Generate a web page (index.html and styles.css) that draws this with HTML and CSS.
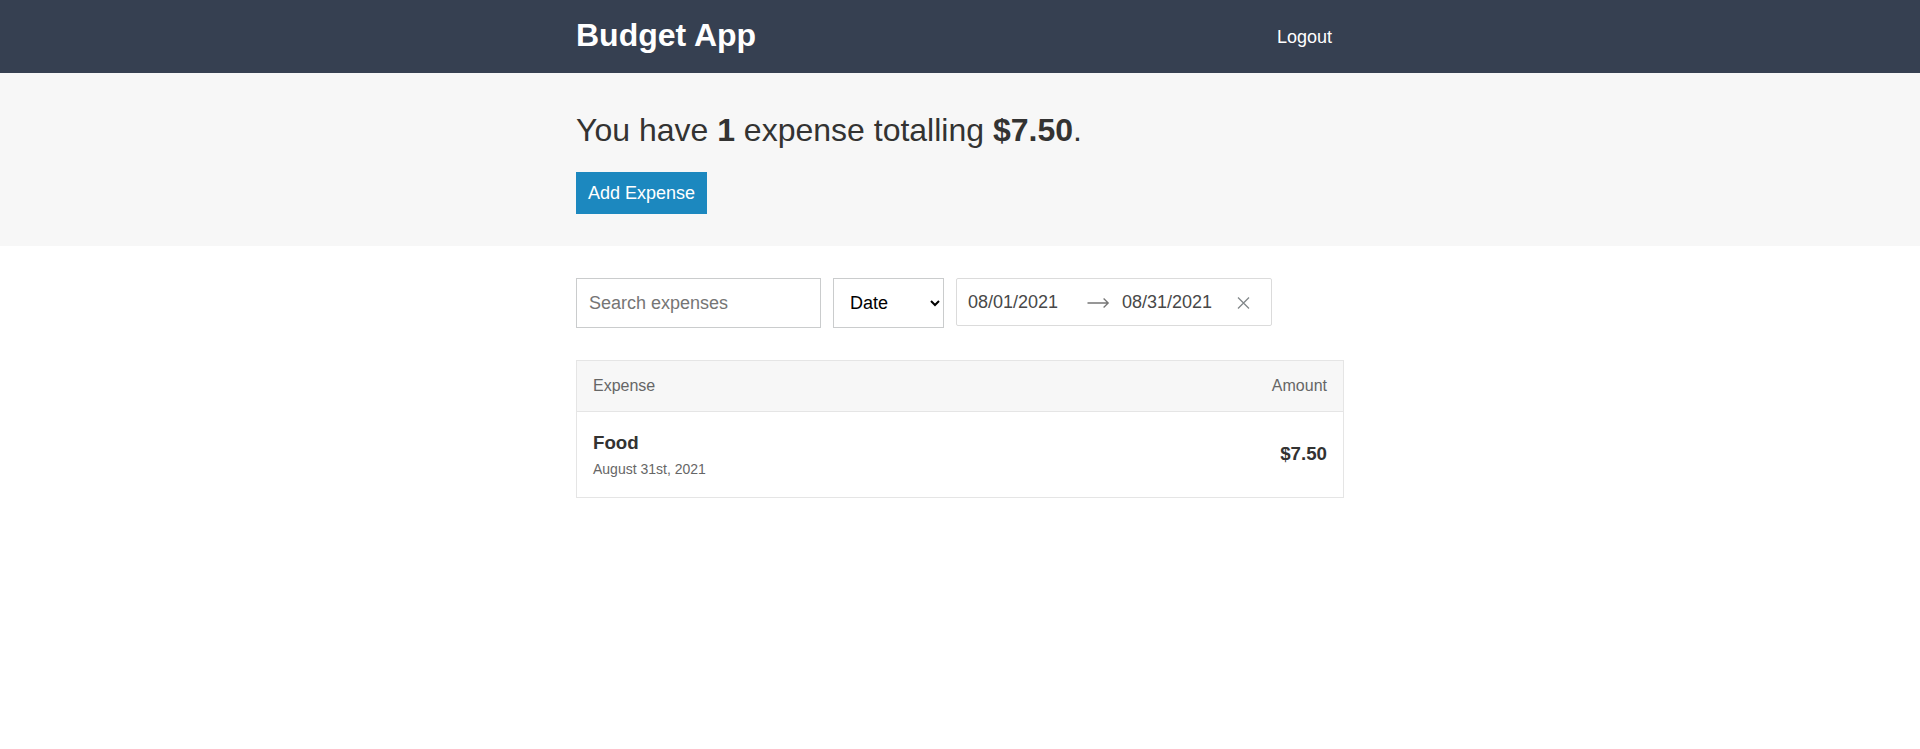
FILE: index.html
```html
<!DOCTYPE html>
<html lang="en">
<head>
<meta charset="utf-8">
<title>Budget App</title>
<link rel="stylesheet" href="styles.css">
</head>
<body>
<header class="header">
  <div class="content-container">
    <div class="header__content">
      <a class="header__title" href="#"><h1>Budget App</h1></a>
      <button class="button button--link">Logout</button>
    </div>
  </div>
</header>
<main>
  <section class="page-header">
    <div class="content-container">
      <h1 class="page-header__title">You have <span class="strong">1</span> expense totalling <span class="strong">$7.50</span>.</h1>
      <div class="page-header__actions">
        <a class="button" href="#">Add Expense</a>
      </div>
    </div>
  </section>
  <div class="content-container">
    <div class="input-group">
      <div class="input-group__item">
        <input class="text-input" type="text" placeholder="Search expenses">
      </div>
      <div class="input-group__item">
        <select class="select">
          <option>Date</option>
          <option>Amount</option>
        </select>
      </div>
      <div class="input-group__item">
        <div class="date-range">
          <div class="date-range__input">08/01/2021</div>
          <svg class="date-range__arrow" width="24" height="24" viewBox="0 0 24 24" aria-hidden="true">
            <path d="M0.5 13 H21.2 M16.6 8.5 L21.2 13 L16.6 17.5" fill="none" stroke="#757575" stroke-width="1.3"/>
          </svg>
          <div class="date-range__input">08/31/2021</div>
          <button class="date-range__clear" aria-label="Clear dates">
            <svg width="15" height="12" viewBox="0 0 15 12" aria-hidden="true">
              <path d="M2 0.5 L13 11.5 M13 0.5 L2 11.5" fill="none" stroke="#82888a" stroke-width="1.3"/>
            </svg>
          </button>
        </div>
      </div>
    </div>
    <div class="list">
      <div class="list-header">
        <div>Expense</div>
        <div>Amount</div>
      </div>
      <div class="list-body">
        <a class="list-item" href="#">
          <div>
            <h3 class="list-item__title">Food</h3>
            <span class="list-item__sub-title">August 31st, 2021</span>
          </div>
          <h3 class="list-item__data">$7.50</h3>
        </a>
      </div>
    </div>
  </div>
</main>
</body>
</html>
```

FILE: styles.css
```css
* {
  box-sizing: border-box;
}

html {
  font-size: 16px;
}

body {
  margin: 0;
  background: #ffffff;
  color: #333332;
  font-family: "Liberation Sans", Arial, Helvetica, sans-serif;
  font-size: 16px;
  line-height: 1.6;
}

.content-container {
  max-width: 768px;
  margin: 0 auto;
}

/* Header */
.header {
  background: #364051;
}

.header__content {
  display: flex;
  align-items: center;
  justify-content: space-between;
  height: 73px;
}

.header__title {
  color: #ffffff;
  text-decoration: none;
}

.header__title h1 {
  margin: 0 0 4px 0;
  font-size: 32px;
  line-height: 1.5;
  font-weight: 700;
}

.button {
  display: inline-block;
  background: #1c88bf;
  border: none;
  color: #ffffff;
  font-family: inherit;
  font-size: 18px;
  line-height: 1;
  padding: 12px;
  text-decoration: none;
  cursor: pointer;
}

.button--link {
  background: none;
}

/* Page header */
.page-header {
  background: #f7f7f7;
  padding: 32px 0;
  margin-bottom: 32px;
}

.page-header__title {
  margin: 0 0 16px 0;
  font-size: 32px;
  font-weight: 300;
  line-height: 1.6;
}

.page-header__title .strong {
  font-weight: 700;
}

.page-header__actions {
  display: flex;
}

/* Filters */
.input-group {
  display: flex;
  align-items: flex-start;
  margin-bottom: 32px;
}

.input-group__item {
  margin-right: 12px;
}

.text-input,
.select {
  height: 50px;
  border: 1px solid #cacccd;
  border-radius: 0;
  background: #ffffff;
  font-family: inherit;
  font-size: 18px;
  font-weight: 300;
  padding: 12px;
  color: #000000;
}

.text-input {
  width: 245px;
}

.text-input::placeholder {
  color: #757575;
}

.select {
  width: 111px;
}

.date-range {
  position: relative;
  display: flex;
  align-items: center;
  border: 1px solid #dbdbdb;
  border-radius: 2px;
  padding-right: 30px;
  background: #ffffff;
}

.date-range__input {
  width: 130px;
  padding: 11px 11px 9px;
  font-size: 18px;
  line-height: 24px;
  color: #484848;
  border-bottom: 2px solid transparent;
}

.date-range__arrow {
  display: block;
  flex: none;
}

.date-range__clear {
  position: absolute;
  right: 0;
  top: calc(50% + 1px);
  transform: translateY(-50%);
  margin: 0 10px 0 5px;
  padding: 10px;
  border: none;
  background: none;
  line-height: 0;
  cursor: pointer;
}

.date-range__clear svg {
  display: block;
}

/* List */
.list-header {
  display: flex;
  justify-content: space-between;
  background: #f7f7f7;
  border: 1px solid #e5e5e5;
  color: #666666;
  padding: 12px 16px;
}

.list-item {
  display: flex;
  align-items: center;
  justify-content: space-between;
  border: 1px solid #e5e5e5;
  border-top: none;
  color: #333332;
  padding: 16px;
  text-decoration: none;
}

.list-item__title {
  margin: 0;
  font-size: 18.72px;
  font-weight: 700;
  line-height: 1.6;
}

.list-item__sub-title {
  display: block;
  color: #666666;
  font-size: 14px;
  line-height: 23.4px;
}

.list-item__data {
  margin: 0;
  padding-left: 12px;
  font-size: 18.72px;
  font-weight: 700;
  line-height: 1.6;
}
```
